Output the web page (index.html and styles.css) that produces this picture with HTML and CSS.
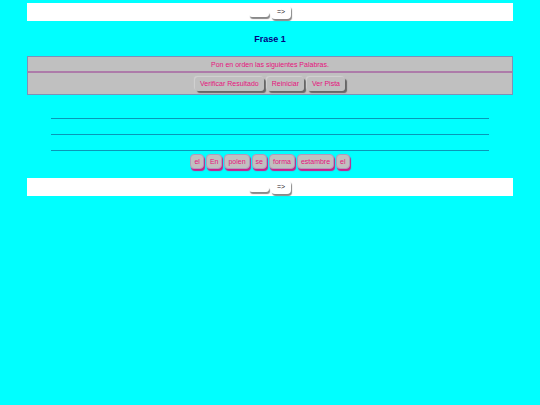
FILE: index.html
```html
<!DOCTYPE html>
<html lang="es">
<head>
  <meta charset="UTF-8" />
  <meta name="viewport" content="width=device-width, initial-scale=1.0"/>
  <title>Frase 1</title>
  <link rel="stylesheet" href="styles.css">
</head>
<body>

<nav class="nav-bar">
  <button class="nav-btn nav-empty" aria-label="Índice"></button>
  <button class="nav-btn">=&gt;</button>
</nav>

<h1>Frase 1</h1>

<div class="instructions">Pon en orden las siguientes Palabras.</div>

<div class="buttons">
  <button class="func-btn">Verificar Resultado</button>
  <button class="func-btn">Reiniciar</button>
  <button class="func-btn">Ver Pista</button>
</div>

<!-- Drop lines for the words -->
<div class="lines">
  <div class="line"></div>
  <div class="line"></div>
  <div class="line"></div>
</div>

<div class="words">
  <button class="word">el</button>
  <button class="word">En</button>
  <button class="word">polen</button>
  <button class="word">se</button>
  <button class="word">forma</button>
  <button class="word">estambre</button>
  <button class="word">el</button>
</div>

<nav class="nav-bar">
  <button class="nav-btn nav-empty" aria-label="Índice"></button>
  <button class="nav-btn">=&gt;</button>
</nav>

</body>
</html>
```

FILE: styles.css
```css
body {
  font-family: "Liberation Sans", Arial, sans-serif;
  font-size: 7px;
  line-height: 8px;
  margin: 0;
  padding: 3px 5%;
  background: #00ffff;
  color: #e6127d;
}
button {
  font: inherit;
  color: inherit;
  margin: 0;
  border: none;
  cursor: pointer;
}
.nav-bar {
  display: flex;
  justify-content: center;
  align-items: flex-end;
  gap: 2px;
  height: 18px;
  padding-bottom: 2px;
  box-sizing: border-box;
  background: white;
}
.nav-btn {
  min-width: 20px;
  height: 14px;
  padding: 0 5px;
  background: white;
  color: #222;
  border-radius: 4px;
  box-shadow: 1px 2px 1px #888;
}
.nav-empty {
  height: 6px;
  margin-bottom: 2px;
}
h1 {
  margin: 12px 0 11px;
  font-size: 9px;
  line-height: 12px;
  text-align: center;
  color: #000080;
}
.instructions {
  padding: 4px 3px 2px;
  border: 1px solid #7c91b8;
  border-bottom-color: #ad7ba9;
  background: #c0c0c0;
  text-align: center;
}
.buttons {
  display: flex;
  justify-content: center;
  gap: 3px;
  padding: 4px 3px 3px;
  border: 1px solid #7c91b8;
  border-top-color: #ad7ba9;
  background: #c0c0c0;
}
.func-btn {
  height: 14px;
  padding: 0 5px;
  background: #c0c0c0;
  border-radius: 3px;
  box-shadow: 2px 2px 1px #666, -1px -1px 1px #d2d2d2;
}
.lines {
  margin: 23px 5% 3px;
}
.line {
  height: 15px;
  border-top: 1px solid #0898b8;
}
.line:last-child {
  height: 0;
}
.words {
  display: flex;
  justify-content: center;
  gap: 2px;
  margin-bottom: 9px;
}
.word {
  height: 15px;
  padding: 1px 3px 0;
  background: #c0c0c0;
  border: 1px solid #b09abd;
  border-radius: 4px;
  box-shadow: 1px 2px 1px #c8208c;
}
```
